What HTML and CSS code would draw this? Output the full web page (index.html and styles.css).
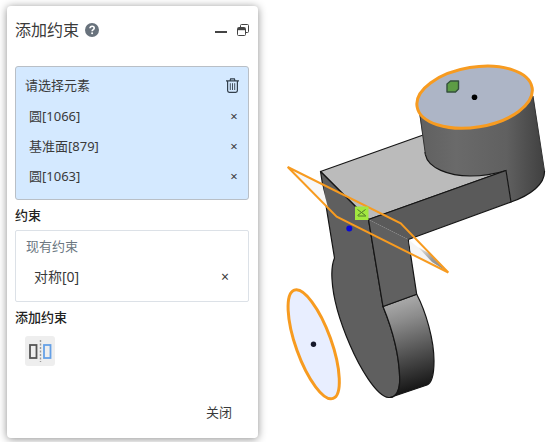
FILE: index.html
```html
<!DOCTYPE html>
<html lang="zh-CN">
<head>
    <meta charset="UTF-8">
    <title>添加约束</title>
    <link rel="stylesheet" href="styles.css">
</head>
<body>
<div class="container">
    <section class="panel">
        <header class="panel-header">
            <h1>添加约束</h1>
            <button class="icon-button" type="button" aria-label="帮助">
                <svg width="14" height="14" viewBox="0 0 14 14">
                    <circle cx="7" cy="7" r="7" fill="#68727c"/>
                    <path d="M5 5.3C5 4 5.9 3.3 7.1 3.3S9.2 4 9.2 5.2C9.2 6.6 7.1 6.5 7.1 8.2" fill="none" stroke="#fff" stroke-width="1.6"/>
                    <circle cx="7.1" cy="10.3" r="1" fill="#fff"/>
                </svg>
            </button>
            <div class="window-buttons">
                <button class="icon-button" type="button" aria-label="最小化">
                    <svg width="12" height="12" viewBox="0 0 12 12">
                        <path d="M0 8H12" stroke="#444" stroke-width="2"/>
                    </svg>
                </button>
                <button class="icon-button" type="button" aria-label="弹出">
                    <svg width="12" height="12" viewBox="0 0 12 12" fill="none" stroke="#444">
                        <path d="M3.5 3V1.5Q3.5 .5 4.5 .5H10.5Q11.5 .5 11.5 1.5V7.5Q11.5 8.5 10.5 8.5H9"/>
                        <rect x=".5" y="3.5" width="8" height="8" rx="1"/>
                        <path d="M1 5H8" stroke-width="2.4"/>
                    </svg>
                </button>
            </div>
        </header>

        <div class="selection">
            <div class="selection-title">
                <span>请选择元素</span>
                <button class="icon-button" type="button" aria-label="清空">
                    <svg width="13" height="15" viewBox="0 0 13 15" fill="none" stroke="#33404c" stroke-width="1.2">
                        <path d="M0 2.8H13M4 2.8L4.6 .8H8.4L9 2.8M1.6 3V12.6Q1.6 14.3 3.2 14.3H9.8Q11.4 14.3 11.4 12.6V3"/>
                        <path d="M4.3 5.2V12M6.5 5.2V12M8.7 5.2V12" stroke-width=".9"/>
                    </svg>
                </button>
            </div>
            <ul>
                <li><span>圆[1066]</span><button class="remove" type="button" aria-label="移除">×</button></li>
                <li><span>基准面[879]</span><button class="remove" type="button" aria-label="移除">×</button></li>
                <li><span>圆[1063]</span><button class="remove" type="button" aria-label="移除">×</button></li>
            </ul>
        </div>

        <h2>约束</h2>
        <div class="existing">
            <p>现有约束</p>
            <ul>
                <li><span>对称[0]</span><button class="remove" type="button" aria-label="移除">×</button></li>
            </ul>
        </div>

        <h2>添加约束</h2>
        <button class="tool" type="button" aria-label="对称">
            <svg width="24" height="24" viewBox="0 0 24 24" fill="none">
                <rect x="2" y="6" width="6.500" height="13" stroke="#555" stroke-width="1.800"/>
                <path d="M12.500 1V23" stroke="#999" stroke-width="1.400" stroke-dasharray="2 1.5"/>
                <rect x="16" y="6" width="6.500" height="13" stroke="#65a0e6" stroke-width="1.800"/>
            </svg>
        </button>

        <footer>
            <button class="close" type="button">关闭</button>
        </footer>
    </section>

    <svg class="model" viewBox="258 0 290 442" role="img" aria-label="三维模型">
        <defs>
            <linearGradient id="cylinder">
                <stop offset="0" stop-color="#606060"/>
                <stop offset=".3" stop-color="#6a6a6a"/>
                <stop offset=".7" stop-color="#606060"/>
                <stop offset="1" stop-color="#404040"/>
            </linearGradient>
            <linearGradient id="round" x1="0" y1="0" x2=".15" y2="1">
                <stop offset="0" stop-color="#b8b8b8"/>
                <stop offset=".3" stop-color="#8c8c8c"/>
                <stop offset=".65" stop-color="#505050"/>
                <stop offset="1" stop-color="#151515"/>
            </linearGradient>
            <linearGradient id="corner" x1="0" y1="0" x2="1" y2="1">
                <stop offset="0" stop-color="#eee"/>
                <stop offset=".5" stop-color="#999"/>
                <stop offset="1" stop-color="#888"/>
            </linearGradient>
        </defs>

        <!-- 支架 -->
        <g stroke="#151515" stroke-width="1.2" stroke-linejoin="round">
            <path fill="#bbb" d="M320.5 171.5L426 134L506 170.5L368.5 219.5Z"/>
            <path fill="#5f5f5f" d="M320.5 171.5L334.5 258C332 264 331.5 271 332 279C333 299 340 322 350 345C359 366 376 396 388.5 397.5C396 398 400 390 399.7 378C399 352 391 326 383 306.5L368.5 219.5Z"/>
            <path fill="url(#round)" d="M383 306.5L416.7 294.3C426 312 434 340 434 361C434 373 432 383 427 385L390 397.5C397 397 400 390 399.7 378C399 352 391 326 383 306.5Z"/>
            <path fill="#606060" d="M368.5 219.5L408.3 239.5L416.7 294.3L383 306.5Z" stroke="none"/>
            <path fill="none" d="M408.3 239.5L416.7 294.3L383 306.5L368.5 219.5"/>
        </g>

        <!-- 圆柱 -->
        <path fill="url(#cylinder)" d="M418.5 108L425.5 155C428 168 449 176 470 176C483 176 495 174 506 170.5L511 202C531 195 545 184 544.5 171L532.5 92Z"/>
        <path fill="none" stroke="#151515" stroke-width="1.2" d="M425 152L425.5 155C428 168 449 176 470 176C483 176 495 174 506 170.5M511 202C531 195 545 184 544.5 171"/>
        <path fill="none" stroke="#333" d="M419.5 112L425.500 155M544.5 171L533 96"/>
        <path fill="#5a5a5a" d="M368.5 219.5L506 170.5L511 202L408.3 239.5Z"/>
        <path fill="none" stroke="#151515" stroke-width="1.2" d="M368.5 219.5L506 170.5L511 202L408.3 239.5"/>
        <ellipse cx="474.6" cy="97.2" rx="58.3" ry="30" transform="rotate(-9.3 474.6 97.2)" fill="#adb5c6" stroke="#f79b20" stroke-width="3"/>
        <circle cx="474.5" cy="97.3" r="2.8"/>
        <path d="M447 84L450.5 81H458.5V89L455.5 92H447Z" fill="#5d9c45" stroke="#34503c" stroke-width="1.4" stroke-linejoin="round"/>

        <!-- 基准圆 -->
        <ellipse cx="313.7" cy="344.3" rx="57.5" ry="17.8" transform="rotate(70.3 313.7 344.3)" fill="#e8eeff" stroke="#f79b20" stroke-width="3"/>
        <circle cx="313.5" cy="344.3" r="2.7" fill="#15182a"/>

        <!-- 基准面 -->
        <path d="M288 167.5L322 184L328 208Z" fill="#f7f7f7"/>
        <path d="M409 240L448 272L411 255Z" fill="#f5f5f5"/>
        <path d="M418 247L430 254L446 271L432 262Z" fill="url(#corner)"/>
        <path d="M287.7 167L400.7 223.3L448.3 272.5L336.7 216.7Z" fill="none" stroke="#f79b20" stroke-width="2"/>
        <rect x="355" y="206.5" width="13.5" height="13.5" fill="#a2e83f"/>
        <path d="M357.5 209.5L365.5 215.5M365.5 209.5L357.5 215.5M358 216H366" stroke="#4f7a2a"/>
        <circle cx="349.3" cy="228.4" r="3" fill="#0808d8"/>
    </svg>
</div>
</body>
</html>
```

FILE: styles.css
```css
*{
    margin: 0;
    padding: 0;
    list-style: none;
    box-sizing: border-box;
}
body{
    background: #ffffff;
    color: #3a3a3a;
    font: 13px/20px "Noto Sans", "Noto Sans CJK SC", sans-serif;
}
button{
    border: none;
    background: none;
    color: inherit;
    font: inherit;
    cursor: pointer;
}
.container{
    display: grid;
    grid-template-columns: 258px 1fr;
    align-items: start;
}
.panel{
    margin: 6px 0 0 7px;
    padding: 12px 9px 16px 8px;
    border-radius: 4px;
    background: #ffffff;
    box-shadow: 0 1px 8px rgba(0, 0, 0, 0.45);
}
.panel-header{
    display: flex;
    align-items: center;
    height: 24px;
    margin-bottom: 24px;
}
.panel-header h1{
    margin-right: 6px;
    font-size: 16px;
    font-weight: 400;
}
.icon-button{
    display: flex;
}
.window-buttons{
    display: flex;
    gap: 10px;
    margin-left: auto;
}
.selection{
    padding: 3px 9px 8px;
    border: 1px solid #b9bfc6;
    border-radius: 3px;
    background: #d4e9ff;
}
.selection-title, .panel li{
    display: flex;
    align-items: center;
    justify-content: space-between;
    height: 30px;
}
.selection ul{
    padding: 1px 0 0 4px;
}
.remove{
    width: 10px;
    text-align: center;
}
.panel h2{
    margin: 5px 0;
    color: #222222;
    font-size: 13px;
    font-weight: 500;
    line-height: 20px;
}
.existing{
    padding: 4px 10px;
    border: 1px solid #dce1e7;
    border-radius: 2px;
}
.existing p{
    color: #6c7782;
    line-height: 22px;
}
.existing li{
    height: 40px;
    padding: 0 8px;
    font-size: 14px;
}
.tool{
    display: flex;
    align-items: center;
    justify-content: center;
    width: 30px;
    height: 30px;
    margin: 9px 0 0 10px;
    border-radius: 3px;
    background: #eeeeee;
}
.panel footer{
    display: flex;
    justify-content: flex-end;
    margin-top: 36px;
    padding-right: 17px;
}
.model{
    display: block;
    width: 100%;
}
```
